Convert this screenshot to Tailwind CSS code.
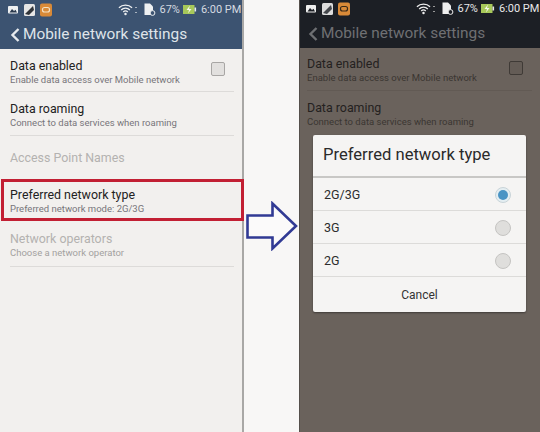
<!DOCTYPE html>
<html>
<head>
<meta charset="utf-8">
<script src="https://cdn.jsdelivr.net/npm/@tailwindcss/browser@4"></script>
</head>
<body class="m-0 bg-[#f8f7f6]">
<div class="relative flex w-[540px] h-[432px] overflow-hidden font-['Roboto',sans-serif] bg-[#f8f7f6]">

  <!-- LEFT PHONE -->
  <div class="w-[244px] h-[432px] shrink-0 flex flex-col bg-[#f2f0ee] border-r-2 border-[#a9a8a6]">
    <div class="h-[49px] shrink-0 bg-[#3c5371] flex flex-col pl-[8px]">
      <div class="h-[17px] mt-[1px] flex items-center text-[#d5dae0] text-[11px] leading-none whitespace-nowrap">
        <svg width="46" height="14" viewBox="0 0 46 14" class="shrink-0">
          <rect x="0" y="3" width="10" height="7.5" rx="1" fill="#eef0f2"/>
          <path d="M1.5 9.5 L4 6 L6 8 L7.5 6.8 L9 9.5Z" fill="#2b3a4e"/>
          <rect x="16" y="1" width="11" height="12" rx="1.5" fill="#e6e6e6"/>
          <path d="M17 11 L25 3 L26 7 L21 12Z" fill="#30343a"/>
          <rect x="32" y="0.5" width="12" height="13" rx="2" fill="#d98a38"/>
          <rect x="34.5" y="4.5" width="7" height="4.5" rx="2" fill="none" stroke="#f4e2c4" stroke-width="1.2"/>
        </svg>
        <svg width="15" height="13" viewBox="0 0 16 13" class="ml-[64px] shrink-0">
          <path d="M1 4.6 A10 10 0 0 1 15 4.6" fill="none" stroke="#eef0f2" stroke-width="1.4"/>
          <path d="M3.4 7 A6.6 6.6 0 0 1 12.6 7" fill="none" stroke="#eef0f2" stroke-width="1.4"/>
          <path d="M5.6 9.2 A3.4 3.4 0 0 1 10.4 9.2" fill="none" stroke="#eef0f2" stroke-width="1.4"/>
          <circle cx="8" cy="11.4" r="1.3" fill="#eef0f2"/>
        </svg>
        <span class="w-[1.5px] h-[6px] ml-[2px] border-y border-[#aab4c0] shrink-0"></span>
        <svg width="12" height="13" viewBox="0 0 12 13" class="ml-[7px] shrink-0">
          <path d="M0.5 0.5 H6 L9 3.5 V12 H0.5Z" fill="#eef0f2"/>
          <circle cx="8.5" cy="10" r="2.4" fill="#3c5371" stroke="#eef0f2" stroke-width="1"/>
        </svg>
        <span class="ml-[4px] shrink-0">67%</span>
        <svg width="14" height="11" viewBox="0 0 14 11" class="ml-[3px] shrink-0">
          <rect x="0" y="1" width="11.5" height="9" fill="#a7c85a"/>
          <rect x="11.5" y="3.5" width="1.6" height="4" fill="#e8ebee"/>
          <path d="M7 1.5 L3.5 6 H6 L5 9.5 L8.5 5 H6Z" fill="#f4f7e8"/>
        </svg>
        <span class="ml-[4px] shrink-0">6:00 PM</span>
      </div>
      <div class="flex items-center h-[22px] mt-[6px] pl-[2px]">
        <svg width="10" height="16" viewBox="0 0 10 16" class="shrink-0 mr-[3px]"><path d="M8.5 2 L2.5 8 L8.5 14" fill="none" stroke="#e6eaee" stroke-width="2.4"/></svg>
        <span class="text-[#dfe4e9] text-[15.4px] leading-none whitespace-nowrap">Mobile network settings</span>
      </div>
    </div>
    <div class="pl-[10px] pr-[8px]">
      <div class="h-[43px] border-b border-[#dddbd9] flex items-center justify-between">
        <div class="pt-[4px]">
          <div class="text-[12.4px] leading-[15px] text-[#222] whitespace-nowrap">Data enabled</div>
          <div class="text-[9.5px] leading-[14px] text-[#77757a] whitespace-nowrap">Enable data access over Mobile network</div>
        </div>
        <div class="w-[14px] h-[14px] mr-[9px] mt-[-2px] rounded-[2px] border border-[#a8a6a4] bg-[#e2e0de]"></div>
      </div>
      <div class="h-[44px] border-b border-[#dddbd9] flex items-center">
        <div class="pt-[4px]">
          <div class="text-[12.4px] leading-[15px] text-[#222] whitespace-nowrap">Data roaming</div>
          <div class="text-[9.5px] leading-[14px] text-[#77757a] whitespace-nowrap">Connect to data services when roaming</div>
        </div>
      </div>
      <div class="h-[43px] pt-[2px] flex items-center text-[12.4px] text-[#b4b2b0] whitespace-nowrap">Access Point Names</div>
      <div class="h-[42px] -ml-[9px] -mr-[10px] border-[3px] border-[#c21f33] pl-[6px] pt-[3px] flex flex-col justify-center">
        <div class="text-[12.4px] leading-[15px] text-[#222] whitespace-nowrap">Preferred network type</div>
        <div class="text-[9.5px] leading-[14px] text-[#77757a] whitespace-nowrap">Preferred network mode: 2G/3G</div>
      </div>
      <div class="h-[46px] pt-[3px] border-b border-[#dddbd9] flex flex-col justify-center">
        <div class="text-[12.4px] leading-[15px] text-[#b4b2b0] whitespace-nowrap">Network operators</div>
        <div class="text-[9.5px] leading-[14px] text-[#a3a1a0] whitespace-nowrap">Choose a network operator</div>
      </div>
    </div>
  </div>

  <!-- ARROW GAP -->
  <div class="w-[55px] shrink-0 pl-[2px] pt-[201px] h-[432px]">
    <svg width="52" height="50" viewBox="0 0 52 50">
      <path d="M1.5 14.5 H26.5 V2.5 L50 25 L26.5 47.5 V36.5 H1.5Z" fill="#fbfafa" stroke="#313a94" stroke-width="2.6"/>
    </svg>
  </div>

  <!-- RIGHT PHONE -->
  <div class="w-[241px] h-[432px] shrink-0 flex flex-col bg-[#6a625c] border-l border-[#55504b]">
    <div class="h-[48px] shrink-0 bg-[#1c1f25] flex flex-col pl-[6px]">
      <div class="h-[17px] flex items-center text-[#e8e8e8] text-[11px] leading-none whitespace-nowrap">
        <svg width="46" height="14" viewBox="0 0 46 14" class="shrink-0">
          <rect x="0" y="3" width="10" height="7.5" rx="1" fill="#eeeeee"/>
          <path d="M1.5 9.5 L4 6 L6 8 L7.5 6.8 L9 9.5Z" fill="#1c1f25"/>
          <rect x="16" y="1" width="11" height="12" rx="1.5" fill="#dcdcdc"/>
          <path d="M17 11 L25 3 L26 7 L21 12Z" fill="#44474c"/>
          <rect x="32" y="0.5" width="12" height="13" rx="2" fill="#d98a38"/>
          <rect x="34.5" y="4.5" width="7" height="4.5" rx="2" fill="none" stroke="#3a2a18" stroke-width="1.2"/>
        </svg>
        <svg width="15" height="13" viewBox="0 0 16 13" class="ml-[64px] shrink-0">
          <path d="M1 4.6 A10 10 0 0 1 15 4.6" fill="none" stroke="#eeeeee" stroke-width="1.4"/>
          <path d="M3.4 7 A6.6 6.6 0 0 1 12.6 7" fill="none" stroke="#eeeeee" stroke-width="1.4"/>
          <path d="M5.6 9.2 A3.4 3.4 0 0 1 10.4 9.2" fill="none" stroke="#eeeeee" stroke-width="1.4"/>
          <circle cx="8" cy="11.4" r="1.3" fill="#eeeeee"/>
        </svg>
        <span class="w-[1.5px] h-[6px] ml-[2px] border-y border-[#999] shrink-0"></span>
        <svg width="12" height="13" viewBox="0 0 12 13" class="ml-[7px] shrink-0">
          <path d="M0.5 0.5 H6 L9 3.5 V12 H0.5Z" fill="#eeeeee"/>
          <circle cx="8.5" cy="10" r="2.4" fill="#1c1f25" stroke="#eeeeee" stroke-width="1"/>
        </svg>
        <span class="ml-[4px] shrink-0">67%</span>
        <svg width="14" height="11" viewBox="0 0 14 11" class="ml-[3px] shrink-0">
          <rect x="0" y="1" width="11.5" height="9" fill="#a7c85a"/>
          <rect x="11.5" y="3.5" width="1.6" height="4" fill="#e8e8e8"/>
          <path d="M7 1.5 L3.5 6 H6 L5 9.5 L8.5 5 H6Z" fill="#f4f7e8"/>
        </svg>
        <span class="ml-[4px] shrink-0">6:00 PM</span>
      </div>
      <div class="flex items-center h-[22px] mt-[6px] pl-[2px]">
        <svg width="10" height="16" viewBox="0 0 10 16" class="shrink-0 mr-[3px]"><path d="M8.5 2 L2.5 8 L8.5 14" fill="none" stroke="#6d6f72" stroke-width="2.4"/></svg>
        <span class="text-[#6f7073] text-[15.4px] leading-none whitespace-nowrap">Mobile network settings</span>
      </div>
    </div>
    <div class="pl-[7px] pr-[8px]">
      <div class="h-[43px] border-b border-[#625a54] flex items-center justify-between">
        <div class="pt-[3px]">
          <div class="text-[12.4px] leading-[15px] text-[#24211f] whitespace-nowrap">Data enabled</div>
          <div class="text-[9.5px] leading-[14px] text-[#3b3632] whitespace-nowrap">Enable data access over Mobile network</div>
        </div>
        <div class="w-[14px] h-[14px] mr-[9px] mt-[-2px] rounded-[2px] border border-[#3f3a36] bg-[#645c56]"></div>
      </div>
      <div class="h-[44px] flex items-center">
        <div class="pt-[3px]">
          <div class="text-[12.4px] leading-[15px] text-[#24211f] whitespace-nowrap">Data roaming</div>
          <div class="text-[9.5px] leading-[14px] text-[#3b3632] whitespace-nowrap">Connect to data services when roaming</div>
        </div>
      </div>
    </div>
  </div>

  <!-- DIALOG -->
  <div class="absolute left-[313px] top-[135px] w-[213px] h-[177px] bg-[#f5f4f3] rounded-[2px] shadow-[0_1px_2px_rgba(0,0,0,0.4)] flex flex-col">
    <div class="h-[43px] shrink-0 border-b-[2px] border-[#c8c7c5] pl-[10px] flex items-center text-[16.6px] text-[#2a2a2a] whitespace-nowrap">Preferred network type</div>
    <div class="h-[33px] shrink-0 pt-[2px] border-b border-[#dcdbd9] pl-[11px] pr-[15px] flex items-center justify-between text-[12.5px] text-[#2c2c2c]">
      <span>2G/3G</span>
      <span class="w-[16px] h-[16px] rounded-full bg-[#e4eef2] border border-[#c9d4d8] flex items-center justify-center"><span class="w-[10px] h-[10px] rounded-full bg-[#4a94c4]"></span></span>
    </div>
    <div class="h-[33px] shrink-0 pt-[2px] border-b border-[#dcdbd9] pl-[11px] pr-[15px] flex items-center justify-between text-[12.5px] text-[#2c2c2c]">
      <span>3G</span>
      <span class="w-[16px] h-[16px] rounded-full bg-[#dfdedc] border border-[#c5c4c2]"></span>
    </div>
    <div class="h-[33px] shrink-0 pt-[2px] border-b border-[#dcdbd9] pl-[11px] pr-[15px] flex items-center justify-between text-[12.5px] text-[#2c2c2c]">
      <span>2G</span>
      <span class="w-[16px] h-[16px] rounded-full bg-[#dfdedc] border border-[#c5c4c2]"></span>
    </div>
    <div class="flex-1 flex items-center justify-center text-[12px] text-[#333]">Cancel</div>
  </div>
</div>
</body>
</html>
